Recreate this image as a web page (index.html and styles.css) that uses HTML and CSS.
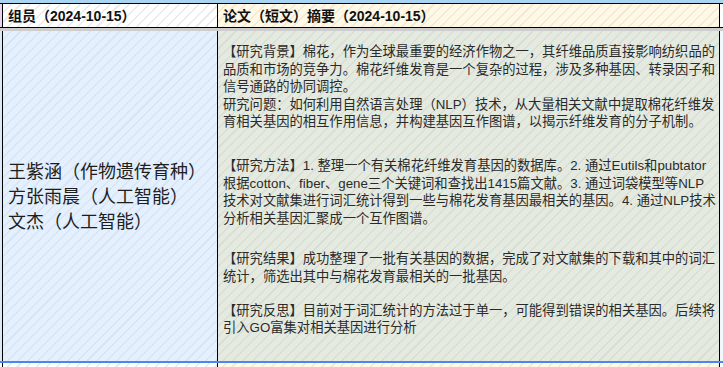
FILE: index.html
```html
<!DOCTYPE html>
<html lang="zh-CN">
<head>
<meta charset="utf-8">
<title>组员与论文摘要</title>
<link rel="stylesheet" href="styles.css">
</head>
<body>
<div class="sheet">
  <div class="strip-top"></div>
  <div class="row head">
    <div class="gutter g-pink"></div>
    <div class="cell col-a hatch-white"><span class="head-text">组员（2024-10-15）</span></div>
    <div class="cell col-b hatch-yellow"><span class="head-text">论文（短文）摘要（2024-10-15）</span></div>
    <div class="gutter g-white"></div>
  </div>
  <div class="gap"></div>
  <div class="row body">
    <div class="gutter g-blue"></div>
    <div class="cell col-a hatch-blue members">
      <div class="member-list">
        <div>王紫涵（作物遗传育种）</div>
        <div>方张雨晨（人工智能）</div>
        <div>文杰（人工智能）</div>
      </div>
    </div>
    <div class="cell col-b hatch-green abstract">
      <p class="p-bg">【研究背景】棉花，作为全球最重要的经济作物之一，其纤维品质直接影响纺织品的品质和市场的竞争力。棉花纤维发育是一个复杂的过程，涉及多种基因、转录因子和信号通路的协同调控。<br>研究问题：如何利用自然语言处理（NLP）技术，从大量相关文献中提取棉花纤维发育相关基因的相互作用信息，并构建基因互作图谱，以揭示纤维发育的分子机制。</p>
      <p class="p-method">【研究方法】1. 整理一个有关棉花纤维发育基因的数据库。2. 通过Eutils和pubtator根据cotton、fiber、gene三个关键词和查找出1415篇文献。3. 通过词袋模型等NLP技术对文献集进行词汇统计得到一些与棉花发育基因最相关的基因。4. 通过NLP技术分析相关基因汇聚成一个互作图谱。</p>
      <p class="p-result">【研究结果】成功整理了一批有关基因的数据，完成了对文献集的下载和其中的词汇统计，筛选出其中与棉花发育最相关的一批基因。</p>
      <p class="p-reflect">【研究反思】目前对于词汇统计的方法过于单一，可能得到错误的相关基因。后续将引入GO富集对相关基因进行分析</p>
    </div>
    <div class="gutter g-light"></div>
  </div>
  <div class="selection-line"></div>
  <div class="row next">
    <div class="gutter g-white"></div>
    <div class="cell col-a hatch-white"></div>
    <div class="cell col-b hatch-yellow"></div>
    <div class="gutter g-white"></div>
  </div>
</div>
</body>
</html>
```

FILE: styles.css
```css
html, body {
  margin: 0;
  padding: 0;
  background: #ffffff;
}

body {
  width: 723px;
  height: 367px;
  overflow: hidden;
  font-family: "Liberation Sans", "Noto Sans CJK SC", sans-serif;
  color: #222222;
}

.sheet {
  display: flex;
  flex-direction: column;
  width: 723px;
}

.strip-top {
  height: 3px;
  background: #a9d5f2;
}

.row {
  display: flex;
}

.gutter {
  flex: none;
}

.row > .gutter:first-child {
  width: 2px;
}

.row > .gutter:last-child {
  width: 3px;
}

.g-pink { background: #e8d3f2; }
.g-white { background: #ffffff; }
.g-blue { background: #dce9f8; }
.g-light { background: #f1f6fc; }

.cell {
  flex: none;
  box-sizing: border-box;
  border-left: 1px solid #000000;
}

.col-a {
  width: 215px;
}

.col-b {
  width: 503px;
  border-right: 1px solid #000000;
}

.hatch-white {
  background: repeating-linear-gradient(135deg, #ffffff 0 5px, #ebebeb 5px 6.5px, #ffffff 6.5px 7px);
}

.hatch-yellow {
  background: repeating-linear-gradient(135deg, #fff8e6 0 5px, #f3ead4 5px 6.5px, #fff8e6 6.5px 7px);
}

.hatch-blue {
  background: repeating-linear-gradient(135deg, #e4f0fd 0 5px, #d8e5f4 5px 6.5px, #e4f0fd 6.5px 7px);
}

.hatch-green {
  background: repeating-linear-gradient(135deg, #e5eae0 0 5px, #d9dfd4 5px 6.5px, #e5eae0 6.5px 7px);
}

.head {
  height: 25px;
  box-sizing: border-box;
  border-top: 1px solid #000000;
  border-bottom: 1px solid #000000;
}

.head .cell {
  display: flex;
  align-items: center;
  padding-left: 5px;
}

.head-text {
  font-size: 14px;
  font-weight: bold;
  color: #111111;
  line-height: 16px;
}

.gap {
  height: 3px;
  background: #cdcdcd;
}

.body {
  height: 330px;
}

.members {
  display: flex;
  align-items: center;
  padding-left: 5px;
  padding-top: 2px;
}

.member-list {
  font-size: 18px;
  line-height: 25px;
  color: #1e1e1e;
}

.abstract {
  padding: 12px 2px 0 5px;
  font-size: 13.3px;
  line-height: 17.6px;
  color: #2a2a2a;
}

.abstract p {
  margin: 0;
}

.abstract .p-method {
  margin-top: 26px;
}

.abstract .p-result {
  margin-top: 23px;
}

.abstract .p-reflect {
  margin-top: 16px;
}

.selection-line {
  height: 2px;
  background: #4a88f0;
}

.next {
  height: 4px;
}
```
